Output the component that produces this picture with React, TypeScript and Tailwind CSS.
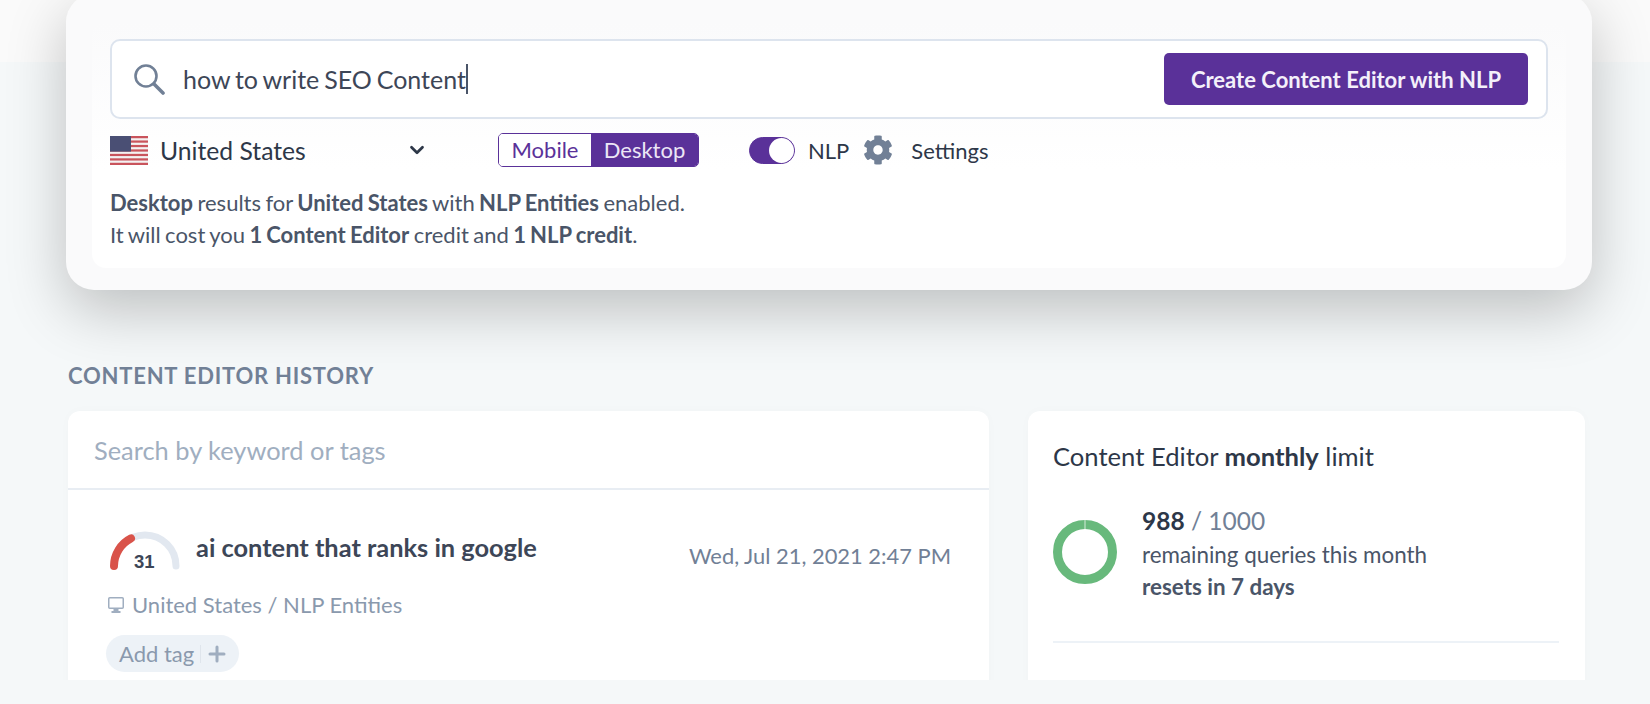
import React from "react";
import { ChevronDown, Plus } from "lucide-react";
import { FaCog } from "react-icons/fa";

function Flag() {
  const stripes = [0, 2, 4, 6, 8, 10, 12];
  return (
    <svg width="38" height="29" viewBox="0 0 38 26" preserveAspectRatio="none" className="shrink-0">
      <rect width="38" height="26" fill="#f4f2f2" />
      {stripes.map((s) => (
        <rect key={s} y={s * 2} width="38" height="2" fill="#c9545c" />
      ))}
      <rect width="21" height="14" fill="#4a4f74" />
    </svg>
  );
}

function SearchGlyph() {
  return (
    <svg width="31" height="31" viewBox="0 0 31 31" fill="none" className="shrink-0">
      <circle cx="12" cy="12" r="10.5" stroke="#718096" strokeWidth="2.6" />
      <line x1="20" y1="20" x2="29" y2="29" stroke="#718096" strokeWidth="3.6" strokeLinecap="round" />
    </svg>
  );
}

function Gauge() {
  return (
    <div className="relative w-[70px] h-[39px] shrink-0">
      <svg width="70" height="39" viewBox="0 0 70 39" fill="none">
        <path d="M4 35 A31 31 0 0 1 66 35" stroke="#e2e8f0" strokeWidth="7" strokeLinecap="round" />
        <path d="M4 35 A31 31 0 0 1 21 7.4" stroke="#d9534a" strokeWidth="8" strokeLinecap="round" />
      </svg>
      <span className="absolute left-[24px] top-[21px] text-[18.5px] leading-5 font-bold text-[#3d4657] font-[family-name:'Liberation_Sans',sans-serif]">31</span>
    </div>
  );
}

function Monitor() {
  return (
    <svg width="16" height="16" viewBox="0 0 16 16" fill="none" className="shrink-0">
      <rect x="0.75" y="0.75" width="14.5" height="10.5" rx="1" stroke="#a0aec0" strokeWidth="1.5" />
      <rect x="5.5" y="11.5" width="5" height="2.5" fill="#a0aec0" />
      <rect x="3.5" y="14" width="9" height="2" fill="#a0aec0" />
    </svg>
  );
}

export default function App() {
  return (
    <div className="relative w-[1650px] h-[704px] overflow-hidden bg-[#f5f8f9] font-[family-name:Lato,sans-serif]">
      <div className="absolute left-0 top-0 w-full h-[62px] bg-[#fafafa]" />
      <div className="relative h-[680px] overflow-hidden">
        {/* Search card */}
        <div className="w-[1526px] h-[296px] ml-[66px] -mt-[6px] pt-[28px] px-[26px] rounded-[28px] bg-[#fafafb] shadow-[0_20px_60px_rgba(0,0,0,0.23)]">
          <div className="h-[246px] rounded-[14px] bg-gradient-to-b from-[#fafafb] to-white to-[60%] pl-[18px] pr-[18px] pt-[17px]">
            <div className="h-[80px] flex items-center rounded-[10px] border-2 border-[#dde4ee] bg-white pl-[22px] pr-[18px]">
              <SearchGlyph />
              <span className="ml-[18px] mt-[1px] text-[25px] [word-spacing:-1.5px] text-[#3d4657]">how to write SEO Content</span>
              <span className="w-[2px] h-[30px] bg-[#4a5568]" />
              <button className="ml-auto w-[364px] h-[52px] rounded-[5px] bg-[#5a3199] text-[#f4f0fa] text-[22px] font-bold">Create Content Editor with NLP</button>
            </div>
            <div className="flex items-center h-[34px] mt-[14px]">
              <Flag />
              <span className="ml-[12px] mt-[1px] w-[246px] text-[24.7px] text-[#2d3748] whitespace-nowrap">United States</span>
              <ChevronDown size={22} strokeWidth={3} color="#2d3748" className="shrink-0" />
              <div className="ml-[70px] flex h-[34px] w-[201px] rounded-[5px] border border-[#5a3199] overflow-hidden text-[22px] leading-[31px]">
                <span className="w-[92px] text-center bg-white text-[#5a3199]">Mobile</span>
                <span className="flex-1 text-center bg-[#5a3199] text-[#ece6f6]">Desktop</span>
              </div>
              <div className="ml-[50px] flex items-center justify-end w-[46px] h-[27px] rounded-full bg-[#5a3199] border border-[#5a3199]">
                <span className="w-[25px] h-[25px] rounded-full bg-white" />
              </div>
              <span className="ml-[13px] text-[22px] text-[#2d3748]">NLP</span>
              <FaCog size={30} color="#718096" className="ml-[14px] shrink-0" />
              <span className="ml-[18px] text-[22px] text-[#2d3748]">Settings</span>
            </div>
            <p className="mt-[20px] text-[22px] leading-[32px] [word-spacing:-1.2px] text-[#4a5568]">
              <b>Desktop</b> results for <b>United States</b> with <b>NLP Entities</b> enabled.
              <br />
              It will cost you <b>1 Content Editor</b> credit and <b>1 NLP credit</b>.
            </p>
          </div>
        </div>

        {/* History */}
        <h2 className="ml-[68px] mt-[70px] text-[22px] leading-[32px] font-bold uppercase tracking-[0.77px] text-[#718096]">Content Editor History</h2>
        <div className="flex ml-[68px] mt-[19px] gap-[39px]">
          <section className="w-[921px] h-[300px] shrink-0 rounded-t-[12px] bg-white shadow-[0_0_12px_rgba(0,0,0,0.02)]">
            <div className="h-[79px] flex items-center px-[26px] pt-[2px] border-b-2 border-[#e8edf3] text-[25.4px] text-[#a0aec0]">Search by keyword or tags</div>
            <div className="pl-[42px] pr-[38px] pt-[41px]">
              <div className="flex items-start">
                <Gauge />
                <span className="ml-[16px] -mt-[1px] text-[25.4px] leading-[34px] font-bold text-[#3d4657]">ai content that ranks in google</span>
                <span className="ml-auto mt-[10px] text-[21.9px] leading-[30px] text-[#718096]">Wed, Jul 21, 2021 2:47 PM</span>
              </div>
              <div className="flex items-center gap-[8px] mt-[18px] -ml-[2px] text-[22px] leading-[32px] text-[#8a99ad]">
                <Monitor />
                United States / NLP Entities
              </div>
              <div className="flex items-center w-[133px] h-[37px] mt-[14px] -ml-[4px] pl-[13px] rounded-full bg-[#edf2f7] text-[22px] text-[#8a99ad]">
                Add tag
                <span className="w-[1px] h-[18px] ml-[6px] bg-[#dfe5ec]" />
                <Plus size={24} strokeWidth={3} color="#a0aec0" className="ml-[4px]" />
              </div>
            </div>
          </section>
          <section className="w-[557px] h-[300px] shrink-0 rounded-t-[12px] bg-white px-[25px] pt-[27px] shadow-[0_0_12px_rgba(0,0,0,0.02)]">
            <h3 className="text-[25.6px] leading-[36px] text-[#2d3748]">Content Editor <b>monthly</b> limit</h3>
            <div className="flex mt-[29px]">
              <svg width="64" height="64" viewBox="0 0 64 64" fill="none" className="mt-[17px] shrink-0">
                <circle cx="32" cy="32" r="27.5" stroke="#68b97c" strokeWidth="9" />
                <rect x="31.5" y="0" width="1" height="9" fill="#d5ecd9" />
              </svg>
              <div className="ml-[25px]">
                <div className="text-[24.5px] leading-[36px] text-[#718096]"><b className="text-[#2d3748]">988</b> / 1000</div>
                <div className="text-[22.4px] leading-[32px] text-[#4a5568]">remaining queries this month</div>
                <div className="text-[22.4px] leading-[32px] font-bold text-[#4a5568]">resets in 7 days</div>
              </div>
            </div>
            <div className="h-[2px] mt-[38px] w-[506px] bg-[#edf2f7]" />
          </section>
        </div>
      </div>
    </div>
  );
}
